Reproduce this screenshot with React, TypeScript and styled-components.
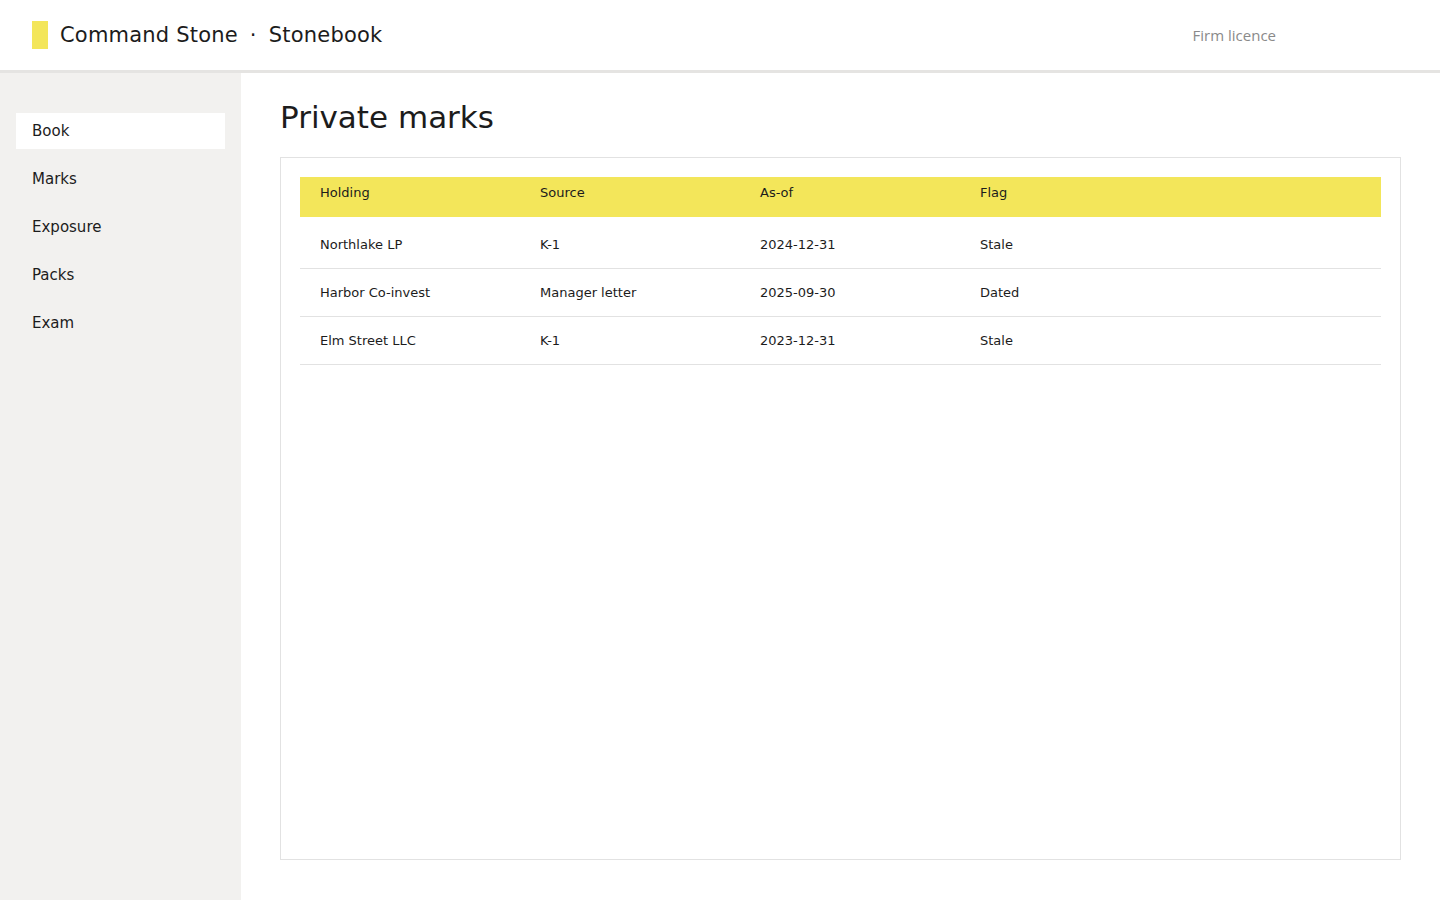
import styled, { createGlobalStyle } from 'styled-components';

const GlobalStyle = createGlobalStyle`
  html, body { margin: 0; padding: 0; }
  body {
    font-family: 'DejaVu Sans', sans-serif;
    color: #1c1c1c;
    background: #fff;
  }
`;

const Page = styled.div`
  display: flex;
  flex-direction: column;
  height: 900px;
`;

const TopBar = styled.header`
  display: flex;
  align-items: center;
  height: 70px;
  padding: 0 32px;
  border-bottom: 3px solid #e5e4e2;
  flex-shrink: 0;
`;

const LogoMark = styled.div`
  width: 16px;
  height: 28px;
  background: #f3e65a;
  margin-right: 12px;
`;

const Brand = styled.div`
  font-size: 21px;
  letter-spacing: 0.2px;
`;

const Dot = styled.span`
  margin: 0 12px;
`;

const Licence = styled.div`
  margin-left: auto;
  margin-right: 132px;
  font-family: 'Open Sans', sans-serif;
  font-size: 15px;
  color: #8a8a8a;
`;

const Body = styled.div`
  display: flex;
  flex: 1;
  min-height: 0;
`;

const Sidebar = styled.nav`
  width: 241px;
  background: #f2f1ef;
  padding: 40px 16px;
  box-sizing: border-box;
  display: flex;
  flex-direction: column;
  gap: 12px;
`;

const NavItem = styled.div<{ $active?: boolean }>`
  height: 36px;
  display: flex;
  align-items: center;
  padding: 0 16px;
  font-size: 15px;
  background: ${(p) => (p.$active ? '#fff' : 'transparent')};
`;

const Main = styled.main`
  flex: 1;
  padding: 26px 39px 40px;
  display: flex;
  flex-direction: column;
`;

const Title = styled.h1`
  font-weight: normal;
  font-size: 31px;
  margin: 0 0 22px;
`;

const Card = styled.section`
  flex: 1;
  border: 1px solid #e2e2e2;
  padding: 19px;
`;

const columns = '220px 220px 220px 1fr';

const HeadRow = styled.div`
  display: grid;
  grid-template-columns: ${columns};
  height: 40px;
  background: #f3e65a;
  font-size: 13px;
  margin-bottom: 4px;
`;

const HeadCell = styled.div`
  padding: 8px 20px 0;
`;

const Row = styled.div`
  display: grid;
  grid-template-columns: ${columns};
  height: 48px;
  align-items: center;
  border-bottom: 1px solid #e2e2e2;
  box-sizing: border-box;
  font-size: 13px;
`;

const Cell = styled.div`
  padding: 0 20px;
`;

const marks = [
  { holding: 'Northlake LP', source: 'K-1', asOf: '2024-12-31', flag: 'Stale' },
  { holding: 'Harbor Co-invest', source: 'Manager letter', asOf: '2025-09-30', flag: 'Dated' },
  { holding: 'Elm Street LLC', source: 'K-1', asOf: '2023-12-31', flag: 'Stale' },
];

const nav = ['Book', 'Marks', 'Exposure', 'Packs', 'Exam'];

export default function App() {
  return (
    <Page>
      <GlobalStyle />
      <TopBar>
        <LogoMark />
        <Brand>
          Command Stone<Dot>·</Dot>Stonebook
        </Brand>
        <Licence>Firm licence</Licence>
      </TopBar>
      <Body>
        <Sidebar>
          {nav.map((n) => (
            <NavItem key={n} $active={n === 'Book'}>
              {n}
            </NavItem>
          ))}
        </Sidebar>
        <Main>
          <Title>Private marks</Title>
          <Card>
            <HeadRow>
              <HeadCell>Holding</HeadCell>
              <HeadCell>Source</HeadCell>
              <HeadCell>As-of</HeadCell>
              <HeadCell>Flag</HeadCell>
            </HeadRow>
            {marks.map((m) => (
              <Row key={m.holding}>
                <Cell>{m.holding}</Cell>
                <Cell>{m.source}</Cell>
                <Cell>{m.asOf}</Cell>
                <Cell>{m.flag}</Cell>
              </Row>
            ))}
          </Card>
        </Main>
      </Body>
    </Page>
  );
}
